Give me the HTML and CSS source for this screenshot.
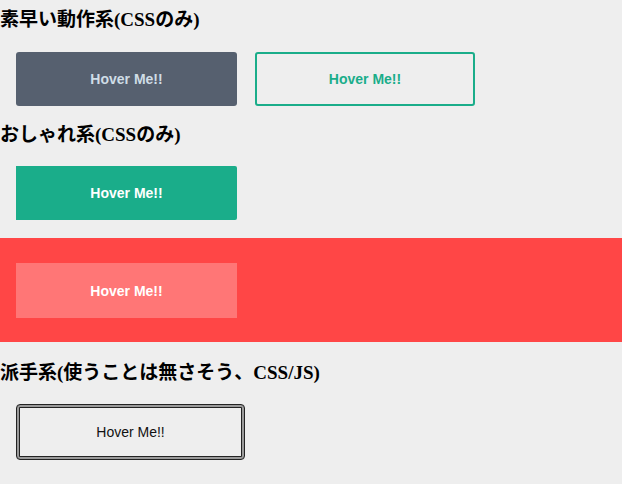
FILE: index.html
```html
<!DOCTYPE html>
<html lang="ja">
<head>
<meta charset="utf-8">
<title>Buttons</title>
<link rel="stylesheet" href="styles.css">
</head>
<body>
  <h3 class="title first">素早い動作系(CSSのみ)</h3>
  <div class="row row-a">
    <a class="btn btn-slate">Hover Me!!</a>
    <a class="btn btn-outline">Hover Me!!</a>
  </div>
  <h3 class="title">おしゃれ系(CSSのみ)</h3>
  <div class="row row-b">
    <a class="btn btn-teal">Hover Me!!</a>
  </div>
  <div class="red">
    <a class="btn btn-pink">Hover Me!!</a>
  </div>
  <h3 class="title third">派手系(使うことは無さそう、CSS/JS)</h3>
  <div class="row row-c">
    <a class="btn btn-double">Hover Me!!</a>
  </div>
</body>
</html>
```
FILE: styles.css
```css
html, body {
  margin: 0;
  padding: 0;
  background: #eeeeee;
}
body {
  display: flex;
  flex-direction: column;
}
.title {
  margin: 0;
  font-family: "Liberation Serif", "Noto Sans CJK JP", serif;
  font-weight: bold;
  font-size: 19px;
  line-height: 24px;
  height: 24px;
  color: #000;
  white-space: nowrap;
}
.title.first { margin-top: 8px; }
.title.third { margin-top: 19px; }
.row {
  display: flex;
  gap: 18px;
  padding: 0 16px;
}
.row-a { padding-top: 20px; padding-bottom: 17px; }
.row-b { padding-top: 19px; padding-bottom: 18px; }
.row-c { padding-top: 19px; }
.btn {
  box-sizing: border-box;
  display: flex;
  align-items: center;
  justify-content: center;
  width: 221px;
  height: 54px;
  font-family: "Liberation Sans", Arial, sans-serif;
  font-weight: bold;
  font-size: 14px;
  text-decoration: none;
}
.btn-slate {
  background: #56606f;
  color: #cfdde6;
  border-radius: 3px;
}
.btn-outline {
  width: 220px;
  border: 2px solid #1aad8a;
  border-radius: 3px;
  color: #1aad8a;
}
.btn-teal {
  background: #1aad8a;
  color: #ffffff;
  border-radius: 0 2px 2px 0;
}
.red {
  background: #ff4646;
  padding: 25px 16px 24px;
  display: flex;
}
.btn-pink {
  background: #ff7676;
  color: #ffffff;
  height: 55px;
}
.btn-double {
  width: 229px;
  height: 56px;
  border: 1px solid #222;
  border-radius: 4px;
  box-shadow: inset 0 0 0 2px #9a9a9a, inset 0 0 0 3px #222;
  color: #111;
  font-weight: normal;
  font-size: 14px;
}
```
